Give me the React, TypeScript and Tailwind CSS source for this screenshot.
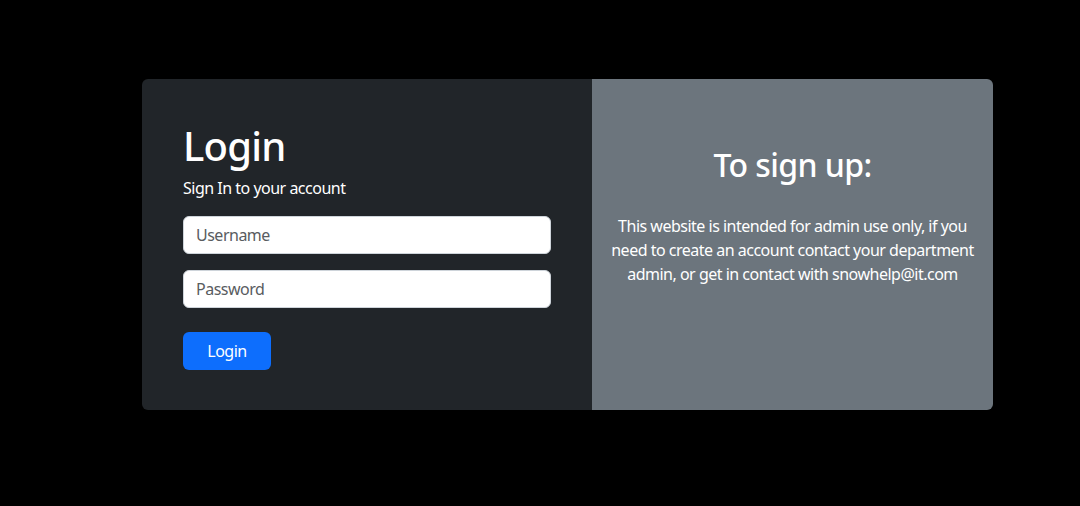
export default function App() {
  return (
    <div
      className="w-screen h-screen bg-black pt-[79px] pl-[142px]"
      style={{ fontFamily: '"Noto Sans", "Open Sans", sans-serif' }}
    >
      <div className="flex w-[851px] h-[331px] rounded-md overflow-hidden tracking-[-0.5px]">
        <div className="w-[450px] bg-[#212529] px-[41px] pt-[43px] text-white">
          <h1 className="text-[40px] leading-[1.2] font-medium mb-[6px] tracking-[-0.8px]">Login</h1>
          <p className="text-base leading-6 mb-4">Sign In to your account</p>
          <input
            className="block w-full h-[38px] mb-4 px-3 rounded-md bg-white border border-[#ced4da] text-base text-[#212529] placeholder:text-[#595c5f] outline-none"
            placeholder="Username"
          />
          <input
            type="password"
            className="block w-full h-[38px] mb-6 px-3 rounded-md bg-white border border-[#ced4da] text-base text-[#212529] placeholder:text-[#595c5f] outline-none"
            placeholder="Password"
          />
          <button className="w-[88px] h-[38px] rounded-md bg-[#0d6efd] text-white text-base">
            Login
          </button>
        </div>
        <div className="flex-1 bg-[#6c757d] px-4 pt-[67px] text-white text-center">
          <h2 className="text-[32px] leading-[1.2] font-medium mb-[30px] tracking-[-0.6px]">
            To sign up:
          </h2>
          <p className="text-base leading-6">
            This website is intended for admin use only, if you need to create an account contact
            your department admin, or get in contact with snowhelp@it.com
          </p>
        </div>
      </div>
    </div>
  );
}
